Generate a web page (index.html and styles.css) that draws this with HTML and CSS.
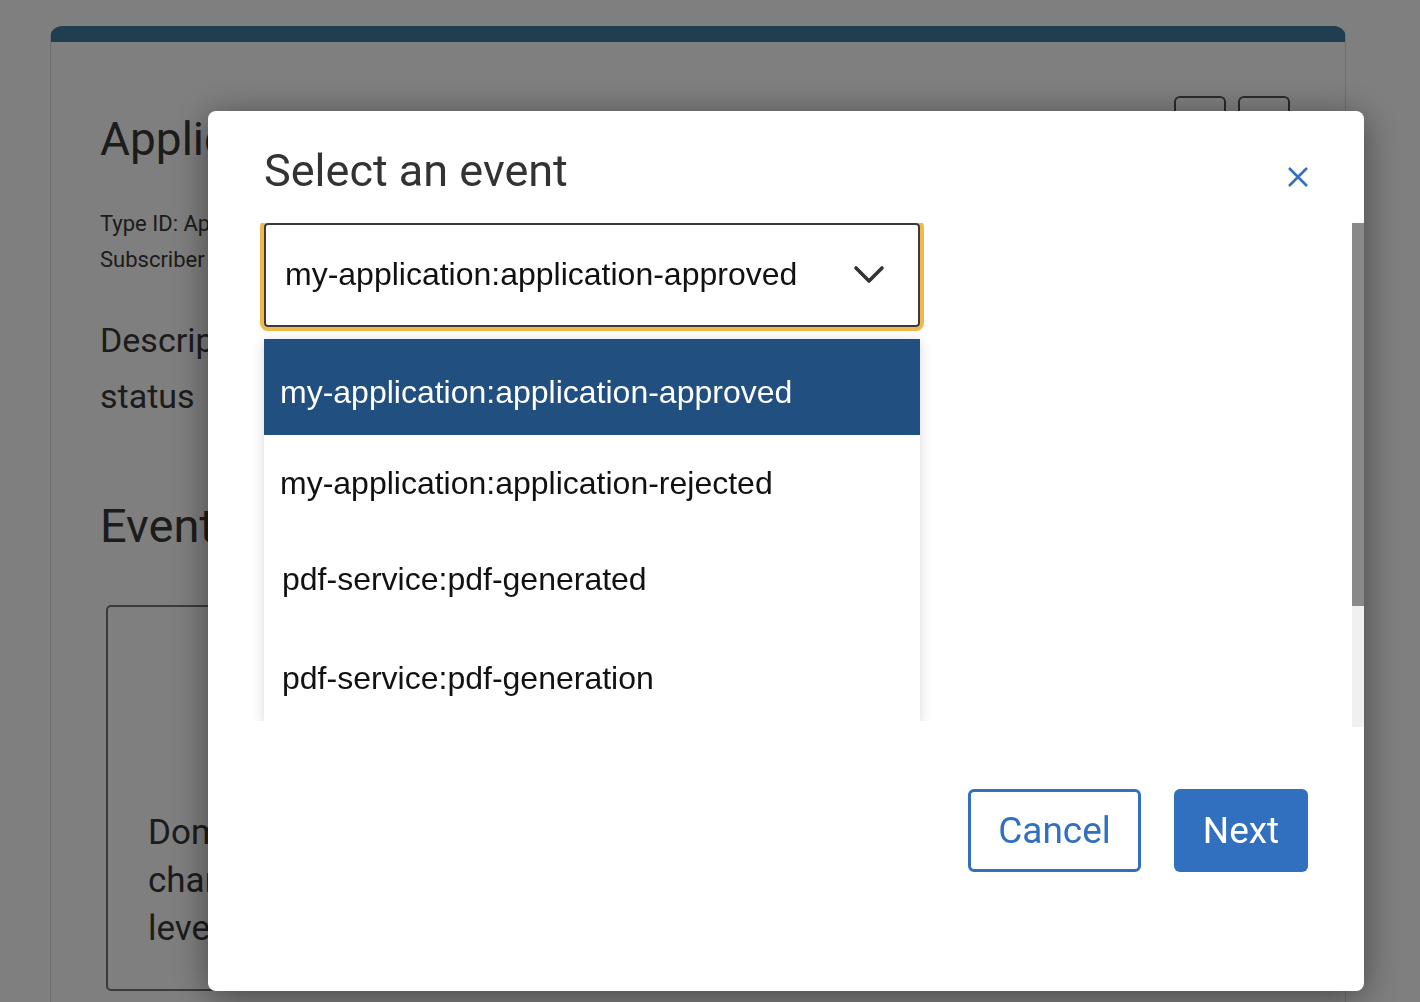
FILE: index.html
```html
<!DOCTYPE html>
<html lang="en">
<head>
<meta charset="utf-8">
<title>Select an event</title>
<link rel="stylesheet" href="styles.css">
</head>
<body>
<div class="page">
  <section class="card">
    <div class="card-head">
      <h1 class="card-title">Application</h1>
      <div class="card-actions">
        <button class="icon-btn" aria-label="Edit">
          <svg width="24" height="24" viewBox="0 0 24 24"><path d="M4 20l1-5L16 4l4 4L9 19z" fill="none" stroke="#3170bf" stroke-width="2"/></svg>
        </button>
        <button class="icon-btn" aria-label="Delete">
          <svg width="24" height="24" viewBox="0 0 24 24"><path d="M9 5V3h6v2M4 6h16M6 6l1 15h10l1-15" fill="none" stroke="#3170bf" stroke-width="2"/></svg>
        </button>
      </div>
    </div>
    <p class="meta">Type ID: Application</p>
    <p class="meta">Subscriber roles</p>
    <p class="desc">Description<br>status</p>
    <h2 class="section-title">Events</h2>
    <div class="event-grid">
      <div class="event-card">
        <p class="event-text">Domain<br>changes<br>level</p>
      </div>
    </div>
  </section>
</div>

<div class="overlay"></div>

<div class="modal" role="dialog" aria-labelledby="modal-title">
  <div class="modal-header">
    <h2 id="modal-title" class="modal-title">Select an event</h2>
    <button class="close-btn" aria-label="Close">
      <svg width="22" height="22" viewBox="0 0 22 22"><path d="M2 2L20 20M20 2L2 20" stroke="#3170bf" stroke-width="2.6" fill="none"/></svg>
    </button>
  </div>
  <div class="modal-body">
    <div class="body-content">
      <div class="select">
        <span class="select-value">my-application:application-approved</span>
        <svg class="chevron" width="32" height="20" viewBox="0 0 32 20"><path d="M3 3L16 16L29 3" stroke="#333" stroke-width="3.6" fill="none" stroke-linecap="round" stroke-linejoin="round"/></svg>
      </div>
      <ul class="listbox">
        <li class="option selected">my-application:application-approved</li>
        <li class="option">my-application:application-rejected</li>
        <li class="option opt-pdf">pdf-service:pdf-generated</li>
        <li class="option opt-pdf opt-last">pdf-service:pdf-generation</li>
      </ul>
    </div>
    <div class="scrollbar"><div class="thumb"></div></div>
  </div>
  <div class="modal-footer">
    <button class="btn btn-secondary">Cancel</button>
    <button class="btn btn-primary">Next</button>
  </div>
</div>
</body>
</html>
```

FILE: styles.css
```css
* { box-sizing: border-box; }

html, body {
  margin: 0;
  padding: 0;
  background: #ffffff;
  font-family: Roboto, "Liberation Sans", sans-serif;
  color: #383838;
  overflow: hidden;
  height: 1002px;
}

.page {
  padding: 26px 74px 0 50px;
  height: 1002px;
  overflow: hidden;
}

.card {
  border: 1px solid #dcdcdc;
  border-top: 16px solid #3e7ea2;
  border-bottom: 0;
  border-radius: 12px 12px 0 0;
  padding: 0 55px 0 49px;
  height: 976px;
  overflow: hidden;
}

.card-head {
  display: flex;
  justify-content: space-between;
  align-items: flex-start;
  padding-top: 54px;
}

.card-title {
  margin: 0;
  font-size: 46px;
  font-weight: 400;
  line-height: 1;
  padding-top: 20px;
}

.card-actions {
  display: flex;
  gap: 12px;
}

.icon-btn {
  width: 52px;
  height: 52px;
  border: 2px solid #555;
  border-radius: 6px;
  background: #fff;
  display: flex;
  align-items: center;
  justify-content: center;
  padding: 0;
}

.meta {
  margin: 0;
  font-size: 22px;
  line-height: 36px;
}
.card-head + .meta { margin-top: 44px; }

.desc {
  margin: 34px 0 0;
  font-size: 34px;
  line-height: 56px;
}

.section-title {
  margin: 78px 0 0;
  font-size: 47px;
  font-weight: 400;
  line-height: 1;
}

.event-grid {
  margin-top: 56px;
  padding-left: 6px;
}

.event-card {
  width: 560px;
  height: 386px;
  border: 2px solid #757575;
  border-radius: 5px;
  padding: 202px 40px 0;
}

.event-text {
  margin: 0;
  font-size: 35px;
  line-height: 48px;
}

.overlay {
  position: fixed;
  inset: 0;
  background: rgba(0, 0, 0, 0.5);
}

.modal {
  position: fixed;
  left: 208px;
  top: 111px;
  width: 1156px;
  height: 880px;
  background: #fff;
  border-radius: 8px;
  box-shadow: 0 6px 36px rgba(0, 0, 0, 0.45);
  display: flex;
  flex-direction: column;
  overflow: hidden;
}

.modal-header {
  height: 112px;
  flex: none;
  display: flex;
  justify-content: space-between;
  align-items: flex-start;
  padding: 0 56px;
}

.modal-title {
  margin: 0;
  padding-top: 37px;
  font-size: 45px;
  font-weight: 400;
  line-height: 1;
  color: #333;
}

.close-btn {
  margin-top: 55px;
  margin-right: -1px;
  padding: 0;
  border: 0;
  background: none;
  width: 22px;
  height: 22px;
}

.modal-body {
  height: 504px;
  flex: none;
  display: flex;
  align-items: flex-start;
}

.body-content {
  flex: 1;
  height: 498px;
  padding-left: 56px;
  overflow: hidden;
}

.select {
  width: 656px;
  height: 104px;
  border: 2px solid #3a3a3a;
  border-radius: 4px;
  box-shadow: 0 0 0 4px #f1b84b;
  display: flex;
  align-items: center;
  justify-content: space-between;
  padding: 0 33px 2px 19px;
  font-family: "Liberation Sans", Arial, sans-serif;
  font-size: 32px;
  color: #111;
}

.chevron { margin-top: 2px; }

.listbox {
  list-style: none;
  margin: 12px 0 0;
  padding: 0;
  width: 656px;
  height: 384px;
  overflow: hidden;
  background: #fff;
  box-shadow: 0 2px 12px rgba(0, 0, 0, 0.16);
  font-family: "Liberation Sans", Arial, sans-serif;
  font-size: 32px;
  color: #111;
}

.option {
  height: 96px;
  display: flex;
  align-items: center;
  padding-left: 16px;
}

.option.selected {
  background: #204f80;
  color: #fff;
  padding-top: 10px;
}

.option.opt-pdf { padding-left: 18px; }
.option.opt-last { padding-top: 6px; }

.scrollbar {
  width: 12px;
  height: 504px;
  flex: none;
  background: #f0f0f0;
}

.thumb {
  height: 383px;
  background: #898989;
}

.modal-footer {
  flex: 1;
  display: flex;
  justify-content: flex-end;
  align-items: flex-start;
  gap: 33px;
  padding: 62px 56px 0 0;
}

.btn {
  height: 83px;
  border-radius: 6px;
  font-family: Roboto, "Liberation Sans", sans-serif;
  font-size: 37px;
  font-weight: 400;
  padding: 0;
}

.btn-secondary {
  width: 173px;
  border: 3px solid #3170bf;
  background: #fff;
  color: #3170bf;
}

.btn-primary {
  width: 134px;
  border: 0;
  background: #3170bf;
  color: #fff;
}
```
